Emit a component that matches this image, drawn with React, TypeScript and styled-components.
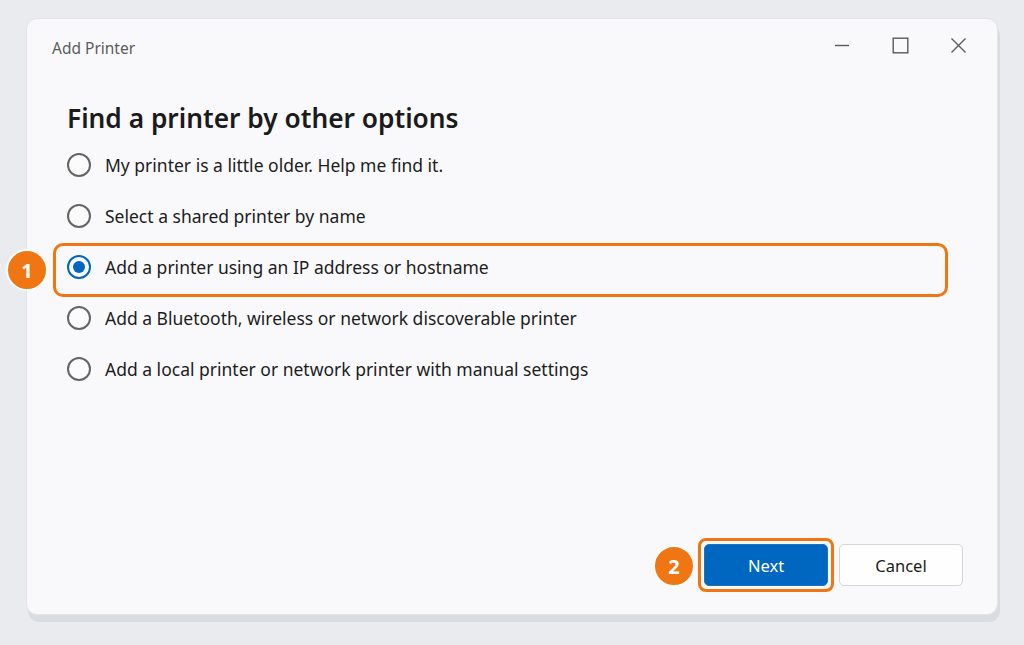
import React from "react";
import styled, { createGlobalStyle } from "styled-components";

const GlobalStyle = createGlobalStyle`
  html, body { margin: 0; padding: 0; }
  body {
    background: #e9ebef;
    font-family: "Noto Sans", "Open Sans", sans-serif;
    width: 1024px;
    height: 645px;
    overflow: hidden;
  }
`;

const Page = styled.div`
  padding: 18px 26px 0 26px;
  box-sizing: border-box;
  height: 645px;
`;

const Window = styled.div`
  width: 972px;
  height: 597px;
  box-sizing: border-box;
  background: #f9f9fb;
  border: 1px solid #e2e4e8;
  border-radius: 11px;
  box-shadow: 2px 7px 0 #dadce0;
  display: flex;
  flex-direction: column;
`;

const TitleBar = styled.div`
  height: 58px;
  display: flex;
  align-items: center;
  padding-left: 25px;
`;

const Title = styled.div`
  flex: 1;
  font-size: 15.5px;
  color: #5c5c5c;
  margin-top: -1px;
`;

const Controls = styled.div`
  display: flex;
  align-items: center;
  height: 100%;
  margin-right: 10px;
  margin-top: -6px;
`;

const ControlButton = styled.div`
  width: 58px;
  height: 100%;
  display: flex;
  align-items: center;
  justify-content: center;
  color: #5a5a5a;
`;

const Content = styled.div`
  flex: 1;
  display: flex;
  flex-direction: column;
  padding: 0 0 0 40px;
`;

const Heading = styled.h1`
  margin: 24px 0 4px 0;
  font-size: 26.3px;
  font-weight: 600;
  color: #1b1b1b;
  line-height: 34px;
`;

const OptionList = styled.div`
  display: flex;
  flex-direction: column;
`;

const OptionRow = styled.div`
  position: relative;
  height: 51px;
  display: flex;
  align-items: center;
  gap: 14px;
`;

const Radio = styled.span<{ $checked?: boolean }>`
  width: 24px;
  height: 24px;
  box-sizing: border-box;
  border-radius: 50%;
  border: ${(p) => (p.$checked ? "2px solid #0067c0" : "2px solid #656565")};
  background: #fbfbfc;
  display: flex;
  align-items: center;
  justify-content: center;
  flex-shrink: 0;
  &::after {
    content: "";
    display: ${(p) => (p.$checked ? "block" : "none")};
    width: 12px;
    height: 12px;
    border-radius: 50%;
    background: #0067c0;
  }
`;

const OptionLabel = styled.span`
  font-size: 17.5px;
  color: #1d1d1d;
`;

const Highlight = styled.div`
  position: absolute;
  left: -14px;
  top: 2px;
  width: 895px;
  height: 54px;
  box-sizing: border-box;
  border: 3px solid #ef7613;
  border-radius: 10px;
  pointer-events: none;
`;

const Badge = styled.div<{ $left: number; $top: number }>`
  position: absolute;
  left: ${(p) => p.$left}px;
  top: ${(p) => p.$top}px;
  width: 42px;
  height: 42px;
  box-sizing: border-box;
  border-radius: 50%;
  border: 2px solid #ffffff;
  background: #ef7613;
  color: #ffffff;
  font-family: "Noto Sans", sans-serif;
  font-weight: 700;
  font-size: 20px;
  display: flex;
  align-items: center;
  justify-content: center;
`;

const Footer = styled.div`
  margin-top: auto;
  display: flex;
  justify-content: flex-end;
  align-items: center;
  gap: 11px;
  padding: 0 34px 28px 0;
`;

const NextWrap = styled.div`
  position: relative;
  padding: 3px;
  border: 3px solid #ef7613;
  border-radius: 8px;
  margin: -6px;
`;

const Button = styled.button<{ $primary?: boolean }>`
  width: 124px;
  height: 42px;
  box-sizing: border-box;
  border-radius: 5px;
  font-family: "Noto Sans", sans-serif;
  font-size: 16.5px;
  cursor: pointer;
  background: ${(p) => (p.$primary ? "#0067c0" : "#fefefe")};
  color: ${(p) => (p.$primary ? "#ffffff" : "#1b1b1b")};
  border: ${(p) => (p.$primary ? "1px solid #1a74c4" : "1px solid #d6d6d8")};
  padding: 0;
`;

const options = [
  "My printer is a little older. Help me find it.",
  "Select a shared printer by name",
  "Add a printer using an IP address or hostname",
  "Add a Bluetooth, wireless or network discoverable printer",
  "Add a local printer or network printer with manual settings",
];

export default function App() {
  const selected = 2;
  return (
    <>
      <GlobalStyle />
      <Page>
        <Window>
          <TitleBar>
            <Title>Add Printer</Title>
            <Controls>
              <ControlButton>
                <svg width="16" height="16" viewBox="0 0 16 16">
                  <path d="M1 8.5h14" stroke="currentColor" strokeWidth="1.4" />
                </svg>
              </ControlButton>
              <ControlButton>
                <svg width="17" height="17" viewBox="0 0 17 17">
                  <rect x="1.2" y="1.2" width="14.6" height="14.6" fill="none" stroke="currentColor" strokeWidth="1.4" />
                </svg>
              </ControlButton>
              <ControlButton>
                <svg width="17" height="17" viewBox="0 0 17 17">
                  <path d="M1.5 1.5l14 14M15.5 1.5l-14 14" stroke="currentColor" strokeWidth="1.4" />
                </svg>
              </ControlButton>
            </Controls>
          </TitleBar>
          <Content>
            <Heading>Find a printer by other options</Heading>
            <OptionList>
              {options.map((o, i) => (
                <OptionRow key={o}>
                  <Radio $checked={i === selected} />
                  <OptionLabel>{o}</OptionLabel>
                  {i === selected && (
                    <>
                      <Highlight />
                      <Badge $left={-61} $top={8}>1</Badge>
                    </>
                  )}
                </OptionRow>
              ))}
            </OptionList>
          </Content>
          <Footer>
            <NextWrap>
              <Badge $left={-48} $top={4}>2</Badge>
              <Button $primary>Next</Button>
            </NextWrap>
            <Button>Cancel</Button>
          </Footer>
        </Window>
      </Page>
    </>
  );
}
